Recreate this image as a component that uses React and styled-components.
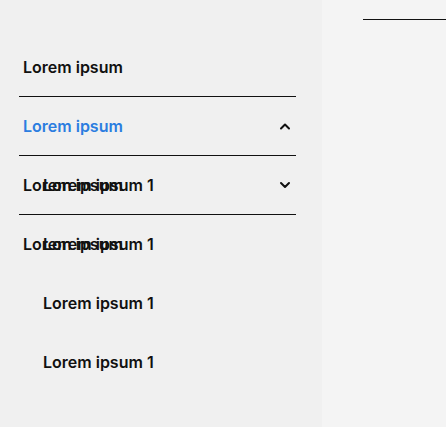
import React from 'react';
import styled, { createGlobalStyle } from 'styled-components';

const GlobalStyle = createGlobalStyle`
  html, body {
    margin: 0;
    padding: 0;
    background: #f4f4f4;
    font-family: Inter, "Noto Sans", sans-serif;
  }
`;

const sections = [
  { label: 'Lorem ipsum', chevron: null, divider: true },
  { label: 'Lorem ipsum', chevron: 'up', active: true, divider: true },
  { label: 'Lorem ipsum', chevron: 'down', divider: true },
  { label: 'Lorem ipsum', chevron: null, divider: false },
];

const subItems = ['Lorem ipsum 1', 'Lorem ipsum 1', 'Lorem ipsum 1', 'Lorem ipsum 1'];

const Chevron = ({ dir }) => (
  <svg width="12" height="8" viewBox="0 0 12 8" fill="none">
    <polyline
      points={dir === 'up' ? '2,6.5 6,2.5 10,6.5' : '2,2 6,6 10,2'}
      stroke="#111"
      strokeWidth="2"
      strokeLinecap="round"
      strokeLinejoin="round"
    />
  </svg>
);

export default function App() {
  return (
    <Page>
      <GlobalStyle />
      <Sidebar>
        <Title>Lorem ipsum</Title>
        <Menu>
          {sections.map((s, i) => (
            <Row key={i} divider={s.divider}>
              <Label active={s.active}>{s.label}</Label>
              {s.chevron && <Chevron dir={s.chevron} />}
            </Row>
          ))}
          <SubMenu>
            {subItems.map((item, i) => (
              <SubItem key={i}>{item}</SubItem>
            ))}
          </SubMenu>
        </Menu>
      </Sidebar>
      <Content>
        <HeaderRule />
      </Content>
    </Page>
  );
}

const Page = styled.div`
  display: flex;
  height: 427px;
  overflow: hidden;
`;

const Sidebar = styled.div`
  width: 322px;
  flex-shrink: 0;
  background: #f0f0f0;
  padding: 0 26px 0 19px;
  box-sizing: border-box;
`;

const Title = styled.h1`
  margin: -24px 0 0 0;
  padding-left: 4px;
  height: 62px;
  font-size: 20px;
  line-height: 24px;
  font-weight: 700;
  color: #111;
`;

const Menu = styled.div`
  position: relative;
  display: flex;
  flex-direction: column;
`;

const Row = styled.div`
  display: flex;
  align-items: center;
  justify-content: space-between;
  height: 58px;
  padding: 0 5px 0 4px;
  border-bottom: 1px solid ${p => (p.divider ? '#111' : 'transparent')};
`;

const Label = styled.span`
  font-size: 16px;
  font-weight: 600;
  color: ${p => (p.active ? '#2b7de0' : '#111')};
`;

const SubMenu = styled.div`
  position: absolute;
  top: 117px;
  left: 24px;
  display: flex;
  flex-direction: column;
`;

const SubItem = styled.div`
  display: flex;
  align-items: center;
  height: 59px;
  font-size: 16px;
  font-weight: 600;
  color: #111;
`;

const Content = styled.div`
  flex: 1;
  background: #f4f4f4;
  padding: 19px 0 0 41px;
`;

const HeaderRule = styled.div`
  height: 1px;
  background: #111;
`;
